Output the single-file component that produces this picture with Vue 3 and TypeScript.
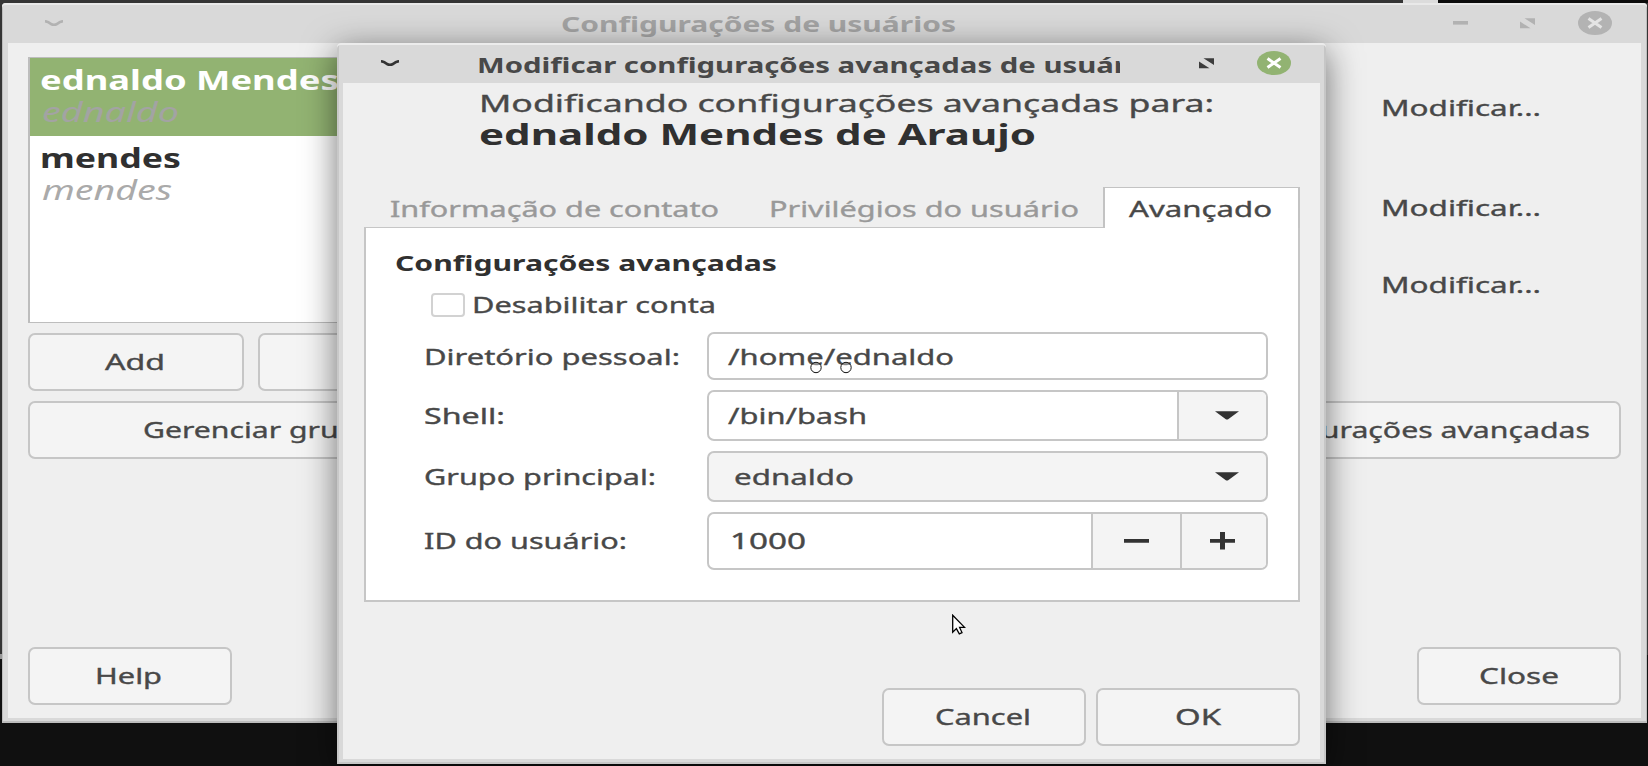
<script setup lang="ts">
import { h, ref } from 'vue'

interface LabelProps {
  text: string
  w: number
}

// Wide UI lettering: the text is fitted to a fixed advance width.
const Label = (p: LabelProps) =>
  h('svg', { class: 'label', width: p.w, height: 30 }, [
    h('text', { x: 0, y: 22, textLength: p.w, lengthAdjust: 'spacingAndGlyphs' }, p.text),
  ])
Label.props = ['text', 'w']

const users = [
  { name: 'ednaldo Mendes de Araujo', nameW: 482, login: 'ednaldo', loginW: 137, selected: true },
  { name: 'mendes', nameW: 141, login: 'mendes', loginW: 130, selected: false },
]

const tabs = [
  { text: 'Informação de contato', w: 329 },
  { text: 'Privilégios do usuário', w: 310 },
]

const disabled = ref(false)
</script>

<template>
  <div class="desktop">
    <div class="panel-light"></div>
    <div class="panel-dark"></div>
    <div class="side-light"></div>

    <section class="window main">
      <header class="titlebar">
        <svg class="menu" width="20" height="7"><path d="M1 1.2 Q4 1.4 7 4 Q10 5.6 13 4 Q16 1.4 19 1.2" /></svg>
        <Label class="title" text="Configurações de usuários" :w="395" />
        <svg class="min" width="15" height="4"><rect width="15" height="3.6" /></svg>
        <svg class="restore" width="15" height="11"><path d="M4.5 .3H15V7ZM0 3.5L10.5 10.3H0Z" /></svg>
        <svg class="close" width="34" height="24"><ellipse cx="17" cy="12" rx="17" ry="12" /><path d="M10.5 7.5L23.5 16.5M23.5 7.5L10.5 16.5" /></svg>
      </header>
      <div class="body">
        <div class="columns">
          <div class="left">
            <ul class="users">
              <li v-for="u in users" :key="u.login" :class="{ selected: u.selected }">
                <Label class="name" :text="u.name" :w="u.nameW" />
                <Label class="login" :text="u.login" :w="u.loginW" />
              </li>
            </ul>
            <div class="pair">
              <button class="btn add"><Label text="Add" :w="60" /></button>
              <button class="btn del"><Label text="Delete" :w="92" /></button>
            </div>
            <button class="btn manage"><Label text="Gerenciar grupos" :w="247" /></button>
          </div>
          <div class="right">
            <Label class="m1" text="Modificar..." :w="160" />
            <Label class="m2" text="Modificar..." :w="160" />
            <Label class="m3" text="Modificar..." :w="160" />
            <button class="btn adv"><Label text="Configurações avançadas" :w="362" /></button>
          </div>
        </div>
        <footer class="foot">
          <button class="btn small help"><Label text="Help" :w="67" /></button>
          <button class="btn small"><Label text="Close" :w="80" /></button>
        </footer>
      </div>
    </section>

    <section class="window dialog">
      <header class="titlebar">
        <svg class="menu" width="20" height="7"><path d="M1 1.2 Q4 1.4 7 4 Q10 5.6 13 4 Q16 1.4 19 1.2" /></svg>
        <div class="clip"><Label class="title" text="Modificar configurações avançadas de usuár" :w="650" /></div>
        <svg class="restore" width="15" height="11"><path d="M4.5 .3H15V7ZM0 3.5L10.5 10.3H0Z" /></svg>
        <svg class="close" width="34" height="24"><ellipse cx="17" cy="12" rx="17" ry="12" /><path d="M10.5 7.5L23.5 16.5M23.5 7.5L10.5 16.5" /></svg>
      </header>
      <div class="body">
        <div class="intro">
          <Label class="lead" text="Modificando configurações avançadas para:" :w="735" />
          <Label class="who" text="ednaldo Mendes de Araujo" :w="557" />
        </div>
        <nav class="tabs">
          <Label v-for="t in tabs" :key="t.text" class="tab" :text="t.text" :w="t.w" />
          <div class="tab-active"><Label text="Avançado" :w="143" /></div>
        </nav>
        <div class="page">
          <Label class="section" text="Configurações avançadas" :w="382" />
          <label class="check">
            <input v-model="disabled" type="checkbox" />
            <Label text="Desabilitar conta" :w="244" />
          </label>
          <div class="form">
            <Label class="low" text="Diretório pessoal:" :w="256" />
            <div class="field low"><Label text="/home/ednaldo" :w="226" /></div>
            <Label text="Shell:" :w="81" />
            <div class="field">
              <Label text="/bin/bash" :w="139" />
              <div class="part drop"><svg width="24" height="9"><path d="M0 .3H24L13.2 8.2Q12 8.9 10.8 8.2Z" /></svg></div>
            </div>
            <Label text="Grupo principal:" :w="232" />
            <div class="field combo">
              <Label text="ednaldo" :w="120" />
              <div class="arrow"><svg width="24" height="9"><path d="M0 .3H24L13.2 8.2Q12 8.9 10.8 8.2Z" /></svg></div>
            </div>
            <Label text="ID do usuário:" :w="203" />
            <div class="field">
              <Label class="num" text="1000" :w="76" />
              <div class="part minus"><svg width="25" height="18"><path d="M0 7H25V10.7H0Z" /></svg></div>
              <div class="part plus"><svg width="25" height="18"><path d="M0 7H10V0H15V7H25V10.7H15V17.6H10V10.7H0Z" /></svg></div>
            </div>
          </div>
        </div>
        <footer class="foot">
          <button class="btn small cancel"><Label text="Cancel" :w="96" /></button>
          <button class="btn small"><Label text="OK" :w="46" /></button>
        </footer>
      </div>
    </section>

    <svg class="marks" width="42" height="13">
      <path d="M12 6H22" />
      <circle cx="6" cy="6.5" r="5.2" />
      <circle cx="36" cy="6.5" r="5.2" />
    </svg>
    <svg class="cursor" width="14" height="21"><path d="M.7 1.2V18.2L4.4 14.6L7.3 19.8L10 18.6L7.6 13.4H12.6Z" /></svg>
  </div>
</template>

<style>
body {
  margin: 0;
  background: #111;
}
</style>

<style scoped>
.desktop {
  position: relative;
  width: 1648px;
  height: 766px;
  overflow: hidden;
  background: linear-gradient(#353535 0 655px, #101010 655px);
  font-family: 'Noto Sans', 'Open Sans', sans-serif;
  font-size: 21.5px;
}
.panel-light {
  position: absolute;
  left: 1403px;
  top: 0;
  width: 35px;
  height: 3px;
  background: #dcdcdc;
}
.panel-dark {
  position: absolute;
  left: 1438px;
  top: 0;
  width: 210px;
  height: 3px;
  background: #0c0c0c;
}
.side-light {
  position: absolute;
  left: 0;
  top: 654px;
  width: 3px;
  height: 5px;
  background: #999;
}
.label {
  display: block;
  flex: none;
  overflow: visible;
  fill: #484848;
  stroke: #484848;
  stroke-width: 0.35;
}
.window {
  position: absolute;
  box-sizing: border-box;
  display: flex;
  flex-direction: column;
  background: #d9d9d9;
  border-radius: 4px 4px 0 0;
}
.main {
  left: 2px;
  top: 3px;
  width: 1645px;
  height: 720px;
  box-shadow: inset 0 2px #e9e9e9, inset -1px -2px #bdbdbd, inset 1px 0 #bdbdbd;
}
.dialog {
  left: 337px;
  top: 43px;
  width: 989px;
  height: 721px;
  box-shadow: inset 0 2px #ececec, inset -2px -2px #c6c6c6, inset 2px 0 #c8c8c8, 0 8px 34px rgba(0, 0, 0, 0.55);
}
.titlebar {
  display: flex;
  align-items: center;
  height: 40px;
  flex: none;
}
.label.title {
  font-weight: 700;
  margin-top: 4px;
  stroke: none;
}
.menu path {
  fill: none;
  stroke: #333;
  stroke-width: 2.6;
}
.restore {
  fill: #3c3c3c;
}
.close ellipse {
  fill: #92b372;
}
.close path {
  stroke: #fff;
  stroke-width: 3;
}
.main .titlebar > * {
  flex: none;
}
.main .title {
  fill: #a3a3a3;
  margin-left: 497px;
}
.main .menu {
  margin-left: 42px;
}
.main .menu path {
  stroke: #b2b2b2;
}
.main .min {
  margin-left: 497px;
  fill: #b2b2b2;
}
.main .restore {
  margin-left: 52px;
  fill: #b2b2b2;
}
.main .close {
  margin-left: 43px;
}
.main .close ellipse {
  fill: #b3b3b3;
}
.main .close path {
  stroke: #e4e4e4;
}
.body {
  flex: 1;
  display: flex;
  flex-direction: column;
  background: #efefef;
}
.main .body {
  margin: 0 6px 5px;
  padding: 14px 20px 13px;
}
.columns {
  display: flex;
  justify-content: space-between;
  align-items: flex-start;
}
.left {
  display: flex;
  flex-direction: column;
  width: 479px;
}
.users {
  list-style: none;
  box-sizing: border-box;
  margin: 0 0 10px;
  padding: 0;
  height: 266px;
  border: 1px solid #bdbdbd;
  border-left-width: 2px;
  background: #fff;
  overflow: hidden;
}
.users li {
  box-sizing: border-box;
  height: 78px;
  padding: 10px 0 0 10px;
}
.users .selected {
  background: #92b372;
}
.name {
  font-size: 26.5px;
  font-weight: 700;
  fill: #303030;
  stroke: none;
}
.selected .name {
  fill: #fff;
}
.login {
  font-size: 26.5px;
  font-style: italic;
  margin: 2px 0 0 2px;
  fill: #aaa;
  stroke: none;
}
.selected .login {
  fill: #a3a3a3;
}
.btn {
  box-sizing: border-box;
  display: flex;
  align-items: center;
  justify-content: center;
  height: 58px;
  margin: 0;
  padding: 1px 0 0;
  border: 2px solid #c6c6c6;
  border-radius: 7px;
  background: #f4f4f4;
  font: inherit;
}
.pair {
  display: flex;
  gap: 14px;
  margin-bottom: 10px;
}
.add {
  width: 216px;
  padding-right: 3px;
}
.del {
  flex: 1;
}
.del .label {
  fill: #c9c68e;
  stroke: none;
}
.manage {
  padding-right: 2px;
}
.right {
  display: flex;
  flex-direction: column;
  align-items: flex-start;
  width: 422px;
}
.right .label {
  margin-left: 182px;
}
.right .m1 {
  margin-top: 37px;
}
.right .m2 {
  margin-top: 70px;
}
.right .m3 {
  margin-top: 47px;
}
.adv {
  width: 422px;
  margin-top: 100px;
  padding-right: 2px;
}
.right .adv .label {
  margin: 0;
}
.foot {
  display: flex;
  justify-content: space-between;
  margin-top: auto;
}
.small {
  width: 204px;
}
.help,
.cancel {
  padding-right: 3px;
}
.dialog .menu {
  margin-left: 43px;
}
.clip {
  width: 643px;
  height: 40px;
  margin-left: 77px;
  overflow: hidden;
}
.clip .title {
  margin-top: 8px;
}
.dialog .restore {
  margin-left: 79px;
}
.dialog .close {
  margin-left: 43px;
}
.dialog .body {
  margin: 0 6px 5px;
  padding: 0 20px 13px 21px;
}
.intro {
  padding: 7px 0 0 115px;
  height: 96px;
}
.lead {
  font-size: 24px;
}
.who {
  font-size: 29px;
  font-weight: 700;
  margin-top: 3px;
  fill: #303030;
  stroke: none;
}
.tabs {
  display: flex;
  align-items: flex-end;
  height: 42px;
  margin-bottom: -1px;
}
.tab {
  fill: #999;
  stroke: #999;
  margin: 0 0 3px 26px;
}
.tab + .tab {
  margin-left: 50px;
}
.tab-active {
  box-sizing: border-box;
  margin-left: auto;
  width: 197px;
  height: 41px;
  padding: 7px 0 0 24px;
  border: 2px solid #c3c3c3;
  border-width: 1px 2px 0;
  background: #fff;
  z-index: 1;
}
.page {
  box-sizing: border-box;
  height: 375px;
  padding: 21px 29px 0 28px;
  border: 2px solid #c6c6c6;
  border-top-width: 1px;
  background: #fff;
}
.section {
  font-weight: 700;
  fill: #303030;
  stroke: none;
  margin-left: 1px;
}
.check {
  display: flex;
  align-items: center;
  height: 30px;
  margin: 13px 0 0 37px;
}
.check input {
  appearance: none;
  box-sizing: border-box;
  width: 34px;
  height: 24px;
  margin: 0 7px 4px 0;
  border: 2px solid #d2d2d2;
  border-radius: 4px;
  background: #fff;
}
.check .label {
  margin-top: -2px;
}
.form {
  display: grid;
  grid-template-columns: 283px 561px;
  grid-template-rows: 48px 51px 51px 58px;
  row-gap: 10px;
  align-items: center;
  margin: 10px 0 0 30px;
}
.form > .label {
  margin-top: 2px;
}
.form > .label.low,
.low .label {
  margin-top: 4px;
}
.field {
  box-sizing: border-box;
  display: flex;
  align-items: center;
  height: 100%;
  padding-left: 19px;
  border: 2px solid #c6c6c6;
  border-radius: 7px;
  background: #fff;
  overflow: hidden;
}
.field > .label {
  margin-top: 2px;
}
.field.low > .label {
  margin-top: 4px;
}
.combo {
  background: #f4f4f4;
  padding-left: 25px;
}
.num {
  margin-left: 2px;
}
.part {
  box-sizing: border-box;
  display: flex;
  align-items: center;
  justify-content: center;
  height: 100%;
  border-left: 2px solid #c6c6c6;
  background: #f4f4f4;
  fill: #333;
}
.drop {
  width: 89px;
  padding-left: 9px;
  margin-left: auto;
}
.arrow {
  display: flex;
  justify-content: center;
  width: 78px;
  margin-left: auto;
  fill: #333;
}
.minus {
  width: 89px;
  margin-left: auto;
}
.plus {
  width: 86px;
  padding-right: 3px;
}
.dialog .foot {
  justify-content: flex-end;
  gap: 10px;
}
.marks {
  position: absolute;
  left: 810px;
  top: 361px;
  fill: none;
  stroke: #111;
  stroke-width: 1;
}
.marks path {
  stroke: #fff;
}
.marks circle {
  fill: rgba(255, 255, 255, 0.35);
}
.cursor {
  position: absolute;
  left: 952px;
  top: 614px;
  fill: #fff;
  stroke: #000;
  stroke-width: 1.3;
}
</style>
